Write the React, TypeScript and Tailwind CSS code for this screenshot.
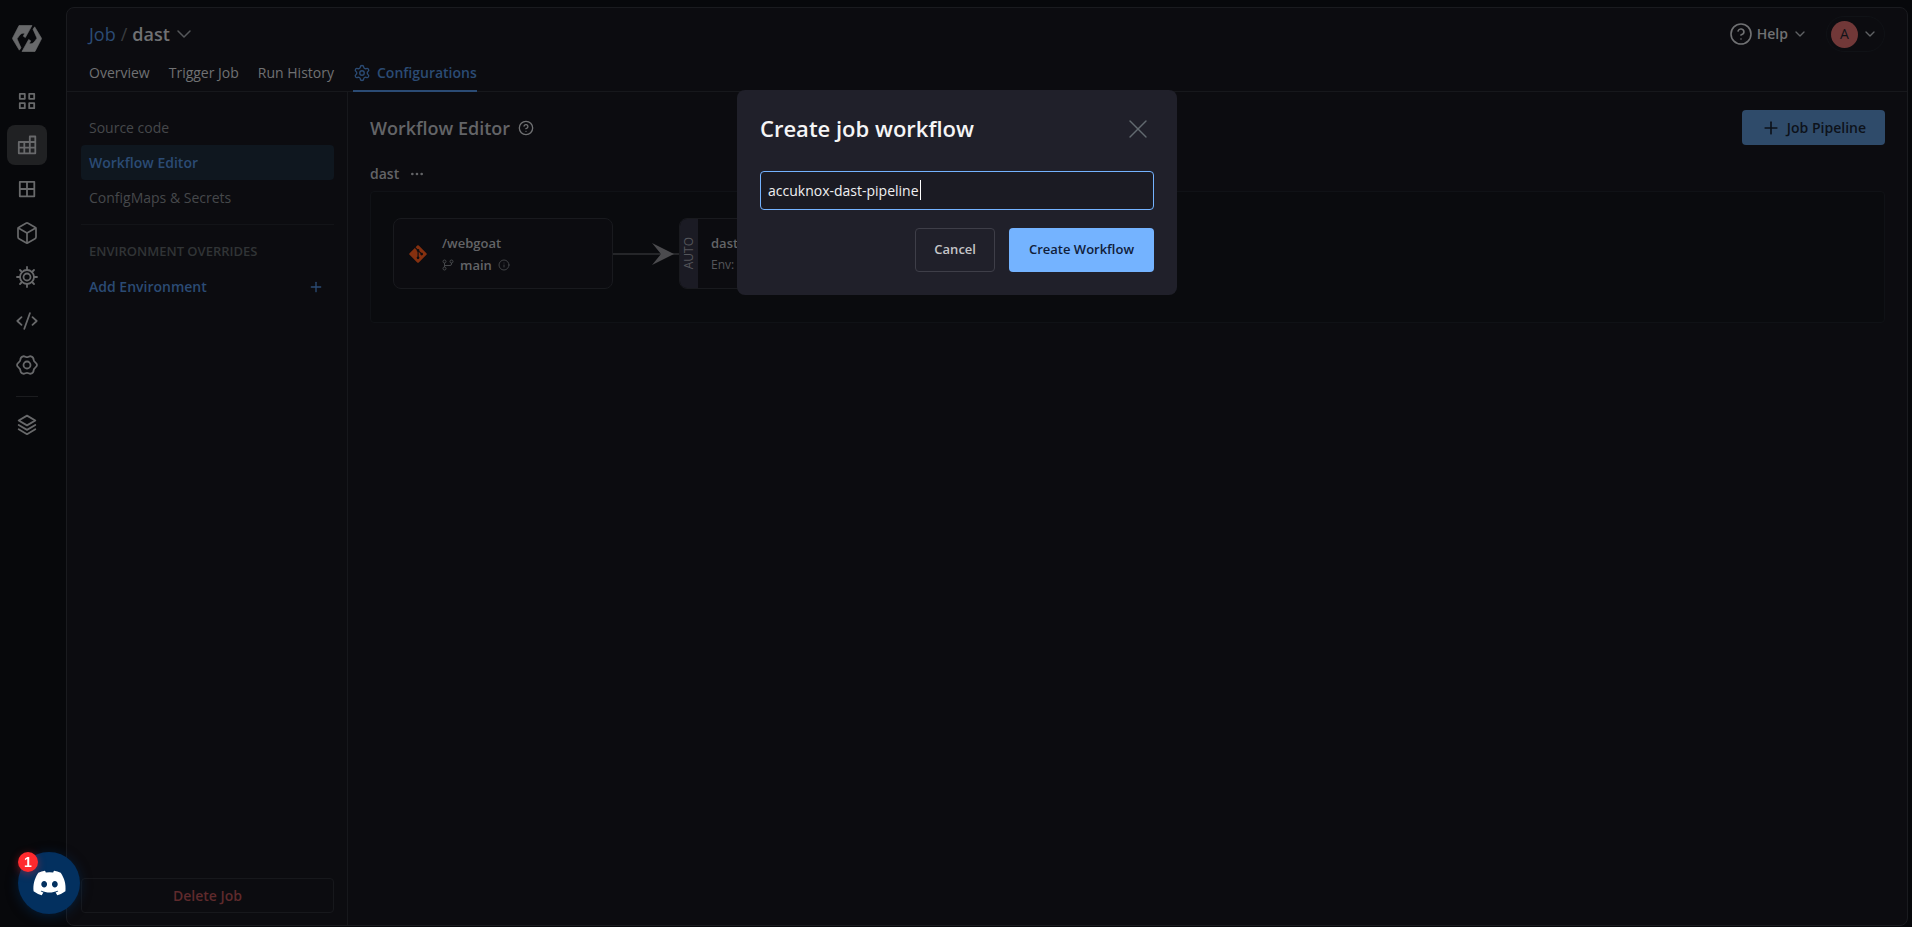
import { useState } from "react";
import {
  Box,
  ChevronDown,
  CircleHelp,
  Ellipsis,
  Info,
  Plus,
  Settings,
  X,
} from "lucide-react";
import { FaDiscord, FaGitAlt } from "react-icons/fa";
import type { ReactNode } from "react";

interface NavItem {
  name: string;
  icon: ReactNode;
}

const iconProps = {
  viewBox: "0 0 24 24",
  fill: "none",
  stroke: "currentColor",
  strokeWidth: 1.8,
  strokeLinejoin: "round" as const,
  strokeLinecap: "round" as const,
  className: "w-6 h-6",
};

const navItems: NavItem[] = [
  {
    name: "Overview",
    icon: (
      <svg {...iconProps}>
        <path d="M4.800 4.800h5v5h-5zM14.200 4.800h5v5h-5zM4.800 14.200h5v5h-5zM14.200 14.200h5v5h-5z" />
      </svg>
    ),
  },
  {
    name: "Jobs",
    icon: (
      <svg {...iconProps}>
        <path d="M3.800 9h16.500v11.300h-16.500zM14.800 9V3.500h5.500V9M3.800 14.700h16.500M9.300 9v11.300M14.800 9v11.300" />
      </svg>
    ),
  },
  {
    name: "Application Groups",
    icon: (
      <svg {...iconProps}>
        <path d="M4.800 4.800h14.500v14.500h-14.500zM12 4.800v14.500M4.800 12h14.500" />
      </svg>
    ),
  },
  {
    name: "Resource Browser",
    icon: <Box className="w-6 h-6" strokeWidth={1.7} />,
  },
  {
    name: "Chart Store",
    icon: (
      <svg {...iconProps}>
        <circle cx="12" cy="12" r="7" />
        <circle cx="12" cy="12" r="3.5" />
        <path d="M12 5V2M12 22v-3M5 12H2M22 12h-3M7 7 5 5M19 19l-2-2M7 17l-2 2M19 5l-2 2" />
      </svg>
    ),
  },
  {
    name: "Bulk Edit",
    icon: (
      <svg {...iconProps}>
        <path d="M6.500 8.200 2.300 12l4.200 3.800M17.500 8.200l4.200 3.800-4.200 3.800M14.900 4.200 9.300 19.800" />
      </svg>
    ),
  },
  {
    name: "Global Configurations",
    icon: (
      <svg {...iconProps}>
        <circle cx="12" cy="12" r="3.5" />
        <path d="M12 4.200c1.500 0 2-1.200 4-.9 1.800.4 2.600 2 2.700 3.700.1 1.200.3 1.400 1.300 2.100 1.200.9 2 1.800 2 2.900s-.8 2-2 2.900c-1 .7-1.200.9-1.300 2.100-.1 1.700-.9 3.300-2.700 3.700-2 .3-2.500-.9-4-.9s-2 1.200-4 .9c-1.800-.4-2.600-2-2.700-3.700-.1-1.200-.3-1.400-1.300-2.100-1.200-.9-2-1.800-2-2.900s.8-2 2-2.900c1-.7 1.200-.9 1.300-2.100.1-1.700.9-3.300 2.700-3.700 2-.3 2.500.9 4 .9Z" />
      </svg>
    ),
  },
];

const tabs: string[] = ["Overview", "Trigger Job", "Run History"];

function Logo() {
  const half = "M21 1H60L40 37 34 33 38 25C30 22 25 27 20 34L15 41 27 68 22 75 1 40Z";
  return (
    <svg
      viewBox="0 0 90 80"
      className="w-[30px] h-[27px]"
      fill="currentColor"
      stroke="currentColor"
      strokeWidth={2}
      strokeLinejoin="round"
    >
      <path d={half} />
      <path d={half} transform="rotate(180 45 40)" />
    </svg>
  );
}

function BranchIcon() {
  return (
    <svg
      viewBox="0 0 12 12"
      className="w-3 h-3 mr-1.5 text-[#46484b]"
      fill="none"
      stroke="currentColor"
    >
      <circle cx="2.500" cy="2.500" r="1.500" />
      <circle cx="9.500" cy="2.500" r="1.500" />
      <circle cx="2.500" cy="9.500" r="1.500" />
      <path d="M2.500 4v4M9.500 4v1q0 1.500-1.500 1.500H2.500" />
    </svg>
  );
}

function Sidebar() {
  return (
    <nav className="w-[66px] shrink-0 flex flex-col items-start pl-[7px] text-[#68696b]">
      <a href="#home" aria-label="Home" className="w-10 flex justify-center pt-[25px]">
        <Logo />
      </a>
      <div className="mt-[29px] flex flex-col gap-1">
        {navItems.map((item, idx) => (
          <a
            key={item.name}
            href="#nav"
            aria-label={item.name}
            className={`w-10 h-10 rounded-lg flex items-center justify-center ${
              idx === 1 ? "bg-[#202123]" : ""
            }`}
          >
            {item.icon}
          </a>
        ))}
      </div>
      <div className="w-[22px] h-px bg-[#1b1c1f] ml-[9px] mt-[11px]" />
      <a
        href="#stacks"
        aria-label="Stack Manager"
        className="w-10 h-10 mt-2 flex items-center justify-center"
      >
        <svg {...iconProps}>
          <path d="m12 2.600 8.300 4.900-8.300 4.900-8.300-4.900ZM3.700 12l8.300 4.900 8.300-4.900M3.700 16.300l8.300 4.900 8.300-4.900" />
        </svg>
      </a>
    </nav>
  );
}

function Header() {
  return (
    <header className="border-b border-[#17181c] px-[22px]">
      <div className="flex items-center justify-between h-[52px]">
        <div className="flex items-center text-lg">
          <a href="#jobs" className="text-[#2b4b74]">
            Job
          </a>
          <span className="mx-[5px] text-[#3a3c3f]">/</span>
          <button className="flex items-center gap-0.5 font-semibold text-[#707173]">
            dast
            <ChevronDown className="w-6 h-6 text-[#55575a]" strokeWidth={1.5} />
          </button>
        </div>
        <div className="flex items-center gap-[18px] text-[#707173]">
          <button className="flex items-center gap-1 text-sm font-semibold">
            <CircleHelp className="w-6 h-6" strokeWidth={1.6} />
            Help
            <ChevronDown className="w-4 h-4 text-[#606265]" />
          </button>
          <button
            aria-label="Account"
            className="flex items-center gap-1 h-9 pl-1 pr-1.5 rounded-full border border-[#101216]"
          >
            <span className="w-[27px] h-[27px] rounded-full bg-[#713838] text-[#121318] text-sm flex items-center justify-center">
              A
            </span>
            <ChevronDown className="w-4 h-4 text-[#606265]" />
          </button>
        </div>
      </div>
      <div className="flex items-start gap-[19px] text-sm font-medium text-[#707173] h-[31px]">
        {tabs.map((tab) => (
          <a key={tab} href="#tab" className="h-full flex items-center pb-1.5">
            {tab}
          </a>
        ))}
        <a
          href="#configurations"
          className="flex items-center gap-1.5 h-8 pb-1 border-b-2 border-[#2b4b74] text-[#2b4b74] font-semibold"
        >
          <Settings className="w-[18px] h-[18px]" strokeWidth={1.8} />
          Configurations
        </a>
      </div>
    </header>
  );
}

function ConfigNav() {
  return (
    <aside className="w-[281px] shrink-0 border-r border-[#17181c] pl-3.5 pr-[13px] pt-[18px] pb-3 flex flex-col text-sm text-[#46484b]">
      <a href="#source" className="h-[35px] px-2 flex items-center">
        Source code
      </a>
      <a
        href="#editor"
        className="h-[35px] px-2 flex items-center rounded bg-[#0f171f] text-[#2b4b74] font-semibold"
      >
        Workflow Editor
      </a>
      <a href="#secrets" className="h-[35px] px-2 flex items-center">
        ConfigMaps &amp; Secrets
      </a>
      <div className="border-t border-[#131418] my-[9px]" />
      <h2 className="h-[35px] px-2 flex items-center text-[13px] font-semibold text-[#313436]">
        ENVIRONMENT OVERRIDES
      </h2>
      <button className="h-[35px] pl-2 pr-2.5 flex items-center justify-between font-semibold text-[#2b4b74]">
        Add Environment
        <Plus className="w-4 h-4" />
      </button>
      <button className="mt-auto h-[35px] rounded border border-[#17181c] font-semibold text-[#5f2a2c]">
        Delete Job
      </button>
    </aside>
  );
}

function Workflow() {
  return (
    <section className="h-[132px] rounded border border-[#101216] bg-[#0a0b0e] px-[22px] pt-[26px] flex items-start text-[13px] text-[#636467]">
      <a
        href="#webgoat"
        className="w-[220px] h-[71px] pl-[15px] rounded-lg border border-[#191a1e] bg-[#0c0c10] flex items-center gap-[15px]"
      >
        <FaGitAlt className="w-[18px] h-5 text-[#85300f]" />
        <div className="flex flex-col gap-0.5 pt-0.5 font-semibold">
          <span>/webgoat</span>
          <span className="flex items-center">
            <BranchIcon />
            main
            <Info className="w-3 h-3 ml-1.5 text-[#46484b]" strokeWidth={1.8} />
          </span>
        </div>
      </a>
      <svg viewBox="0 0 66 24" className="w-[66px] h-6 mt-6 shrink-0">
        <path d="M0 12H66" stroke="#252629" strokeWidth="2" />
        <path d="M39 1 61 12 39 23 48 12Z" fill="#4b4b4e" />
      </svg>
      <a
        href="#pipeline"
        className="w-[240px] h-[71px] rounded-lg border border-[#191a1e] bg-[#0c0c10] overflow-hidden flex"
      >
        <span className="w-[18px] bg-[#1b1b24] flex items-center justify-center">
          <span className="[writing-mode:vertical-rl] rotate-180 text-xs text-[#55565b]">
            AUTO
          </span>
        </span>
        <div className="pl-[13px] flex flex-col justify-center gap-1">
          <span className="font-semibold">dast</span>
          <span className="text-xs text-[#55565b]">Env:</span>
        </div>
      </a>
    </section>
  );
}

function Dialog() {
  const [name, setName] = useState("accuknox-dast-pipeline");
  return (
    <div className="fixed inset-0 flex items-start justify-center pt-[90px] pl-0.5">
      <div
        role="dialog"
        aria-labelledby="dialog-title"
        className="w-[440px] rounded-lg bg-[#20202a] px-[23px] pt-[22px] pb-[23px]"
      >
        <div className="flex items-center justify-between">
          <h1 id="dialog-title" className="text-[22px] font-semibold text-[#f5f5f6]">
            Create job workflow
          </h1>
          <button aria-label="Close">
            <X className="w-8 h-8 text-[#626a70]" strokeWidth={1} />
          </button>
        </div>
        <div className="relative mt-[26px]">
          <input
            autoFocus
            aria-label="Workflow name"
            value={name}
            onChange={(e) => setName(e.target.value)}
            className="block w-full h-[39px] rounded border border-[#74b3ff] bg-[#1b1b23] px-[7px] text-sm text-[#f0f0f2] caret-transparent outline-none"
          />
          <span className="absolute left-[160px] top-[9px] w-px h-5 bg-white" />
        </div>
        <div className="mt-[18px] flex justify-end gap-3.5 text-[13px]">
          <button className="h-11 px-[18px] rounded border border-[#3e3e48] font-semibold text-[#c5c5c8]">
            Cancel
          </button>
          <button className="h-11 px-5 rounded bg-[#74b3ff] font-semibold text-[#10203a]">
            Create Workflow
          </button>
        </div>
      </div>
    </div>
  );
}

function ChatButton() {
  return (
    <button
      aria-label="Open chat"
      className="fixed left-[18px] bottom-[13px] w-[62px] h-[62px] rounded-full bg-[#03305f] text-white flex items-center justify-center shadow-[0_2px_12px_rgba(3,48,95,0.5)]"
    >
      <FaDiscord className="w-[35px] h-7" />
      <span className="absolute left-0 top-0 w-5 h-5 rounded-full bg-[#ff2a2e] font-['Liberation_Sans',sans-serif] text-sm font-bold flex items-center justify-center shadow-[0_2px_8px_rgba(255,42,46,0.4)]">
        1
      </span>
    </button>
  );
}

export default function App() {
  return (
    <div className="min-h-screen flex bg-[#07080b] font-['Open_Sans',sans-serif]">
      <Sidebar />
      <div className="flex-1 mt-[7px] mr-1 mb-px rounded-lg border border-[#1a1b1f] bg-[#0c0c10] flex flex-col">
        <Header />
        <div className="flex flex-1">
          <ConfigNav />
          <main className="flex-1 px-[22px] pt-[18px] text-[#707173]">
            <div className="flex items-center justify-between h-[35px]">
              <div className="flex items-center gap-2">
                <h1 className="text-lg font-semibold text-[#636467]">Workflow Editor</h1>
                <CircleHelp className="w-4 h-4" />
              </div>
              <button className="h-[35px] px-[19px] rounded bg-[#2f4b6a] text-[#0d121a] text-sm font-semibold flex items-center gap-1.5">
                <Plus className="w-5 h-5" />
                Job Pipeline
              </button>
            </div>
            <div className="mt-[17px] mb-[5px] h-6 flex items-center gap-2.5 text-sm font-semibold text-[#636467]">
              dast
              <button aria-label="More options">
                <Ellipsis className="w-4 h-4" />
              </button>
            </div>
            <Workflow />
          </main>
        </div>
      </div>
      <Dialog />
      <ChatButton />
    </div>
  );
}
